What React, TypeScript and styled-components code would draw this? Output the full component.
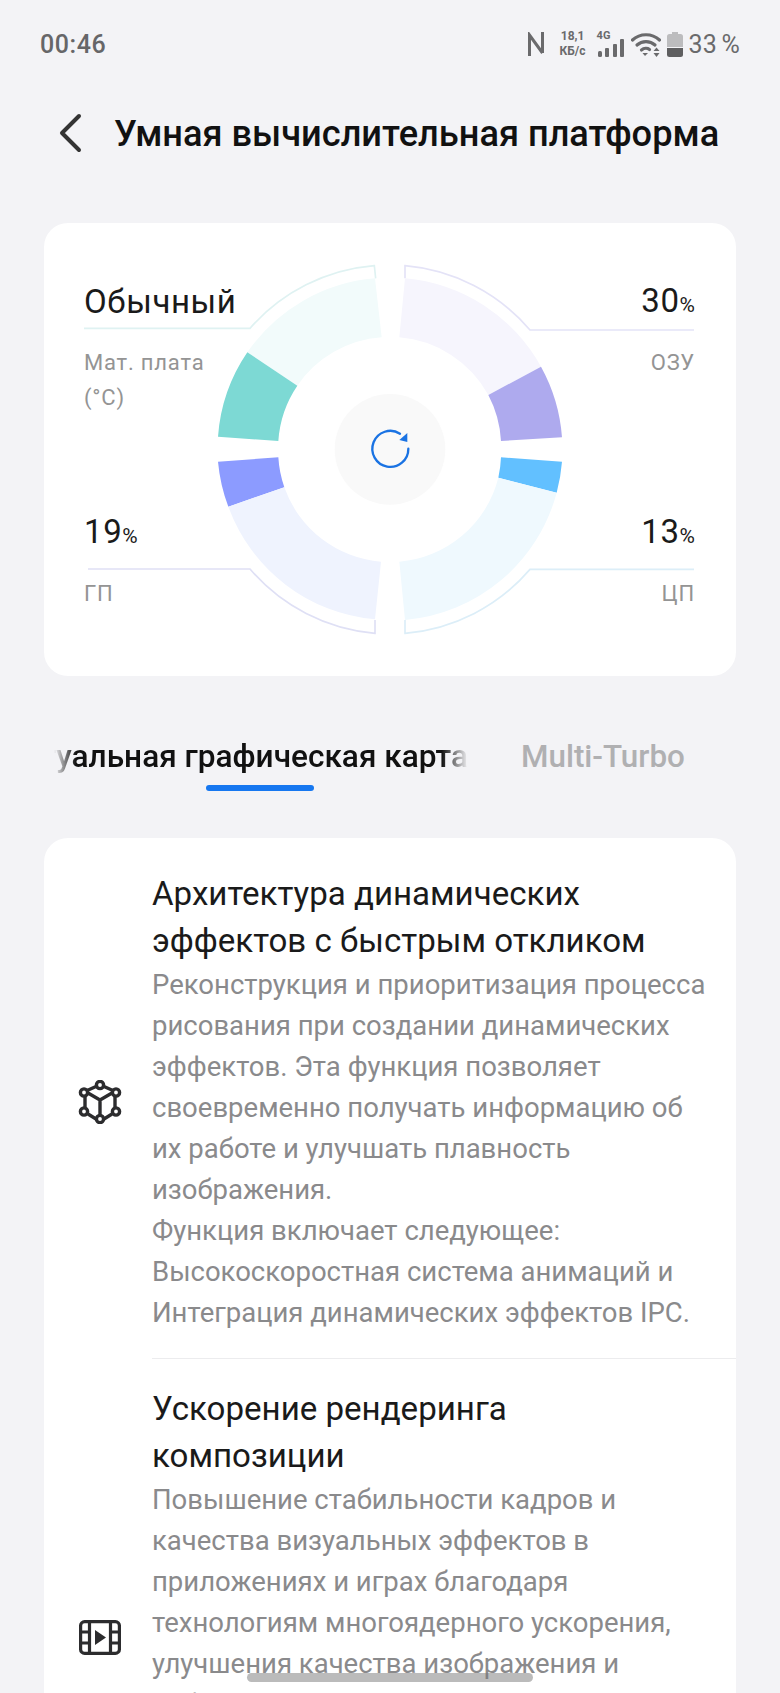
import React from "react";
import styled, { createGlobalStyle } from "styled-components";

const Global = createGlobalStyle`
  html, body { margin: 0; padding: 0; background: #f3f3f6; }
  body { font-family: Roboto, "Noto Sans", sans-serif; }
`;

const Page = styled.div`
  position: relative;
  width: 780px;
  height: 1693px;
  overflow: hidden;
  background: #f3f3f6;
`;

const StatusBar = styled.div`
  display: flex;
  align-items: center;
  justify-content: space-between;
  height: 30px;
  padding: 29px 40px 0 40px;
`;

const Time = styled.span`
  font-size: 25px;
  font-weight: 500;
  letter-spacing: 0.6px;
  color: #666668;
`;

const StatusIcons = styled.div`
  display: flex;
  align-items: center;
  color: #6a6a6c;
`;

const Speed = styled.div`
  display: flex;
  flex-direction: column;
  align-items: center;
  margin: 0 11px 0 15px;
  font-size: 12px;
  font-weight: 700;
  line-height: 15px;
`;

const Net = styled.div`
  position: relative;
  width: 28px;
  height: 25px;
  margin-right: 6px;
`;

const NetLabel = styled.span`
  position: absolute;
  left: 0;
  top: -3px;
  font-size: 11px;
  font-weight: 700;
  line-height: 13px;
`;

const BarsSlot = styled.span`
  position: absolute;
  left: 0;
  bottom: 0;
  display: flex;
`;

const BatterySlot = styled.span`
  display: flex;
  margin-left: 6px;
`;

const Percent = styled.span`
  margin-left: 6px;
  font-size: 25px;
  word-spacing: -2px;
  letter-spacing: 0.2px;
`;

const Header = styled.div`
  display: flex;
  align-items: center;
  height: 44px;
  margin-top: 52px;
  padding-left: 58px;
`;

const Title = styled.h1`
  margin: 0 0 0 32px;
  font-size: 36.2px;
  font-weight: 500;
  color: #111;
  white-space: nowrap;
`;

const GaugeCard = styled.section`
  display: grid;
  width: 692px;
  height: 453px;
  margin: 68px 0 0 44px;
  background: #fff;
  border-radius: 24px;
  overflow: hidden;
`;

const GaugeSvg = styled.svg`
  grid-area: 1 / 1;
  width: 692px;
  height: 453px;
`;

const Labels = styled.div`
  grid-area: 1 / 1;
  display: grid;
  grid-template-columns: 1fr 1fr;
  grid-template-rows: 1fr 1fr;
  padding: 0 41px 0 40px;
`;

const Label = styled.div<{ $right?: boolean; $top: number }>`
  display: flex;
  flex-direction: column;
  align-items: ${(p) => (p.$right ? "flex-end" : "flex-start")};
  text-align: ${(p) => (p.$right ? "right" : "left")};
  padding-top: ${(p) => p.$top}px;
`;

const Value = styled.div`
  font-size: 33px;
  line-height: 36px;
  letter-spacing: 0.6px;
  color: #1a1a1a;
  small {
    font-size: 21px;
    line-height: 0;
    letter-spacing: 0;
  }
`;

const Caption = styled.div<{ $gap: number }>`
  margin-top: ${(p) => p.$gap}px;
  font-size: 22px;
  line-height: 35px;
  letter-spacing: 0.8px;
  color: #949494;
`;

const Tabs = styled.div`
  display: flex;
  align-items: flex-start;
  height: 100px;
  margin-top: 62px;
`;

const TabClip = styled.div`
  display: flex;
  flex-direction: column;
  align-items: flex-end;
  width: 414px;
  margin-left: 54px;
  overflow: hidden;
  -webkit-mask-image: linear-gradient(90deg, transparent 0, #000 22px, #000 388px, transparent 414px);
  mask-image: linear-gradient(90deg, transparent 0, #000 22px, #000 388px, transparent 414px);
`;

const ActiveTab = styled.div`
  flex: none;
  font-size: 31.6px;
  font-weight: 500;
  line-height: 38px;
  color: #111;
  white-space: nowrap;
`;

const Underline = styled.div`
  width: 108px;
  height: 6px;
  margin: 9px 154px 0 0;
  border-radius: 3px;
  background: #1677f0;
`;

const Tab = styled.div`
  margin-left: 53px;
  font-size: 31.4px;
  font-weight: 500;
  line-height: 38px;
  color: #b0b0b2;
  white-space: nowrap;
`;

const ListCard = styled.section`
  width: 692px;
  margin: 0 0 0 44px;
  padding-top: 6px;
  background: #fff;
  border-radius: 24px;
`;

const Row = styled.div<{ $minHeight?: number }>`
  display: flex;
  align-items: center;
  min-height: ${(p) => p.$minHeight ?? 0}px;
`;

const IconCell = styled.div`
  flex: 0 0 108px;
  display: flex;
  justify-content: center;
  padding-left: 3px;
  box-sizing: border-box;
  color: #2c2c2e;
`;

const RowBody = styled.div<{ $divider?: boolean }>`
  flex: 1;
  align-self: stretch;
  padding: 26px 22px 25px 0;
  border-bottom: ${(p) => (p.$divider ? "1px solid #ececee" : "none")};
`;

const RowTitle = styled.div`
  padding-right: 30px;
  font-size: 33.1px;
  line-height: 47px;
  color: #1a1a1a;
`;

const RowText = styled.div`
  font-size: 27.5px;
  line-height: 41px;
  color: #8a8a8c;
`;

const HomeBar = styled.div`
  position: absolute;
  left: 247px;
  top: 1673px;
  width: 286px;
  height: 9px;
  border-radius: 5px;
  background: rgba(120, 120, 120, 0.5);
`;

type Seg = { d: string; fill: string };

const arc = (a: number[], b: number[], c: number[], d: number[], sweep: 0 | 1) =>
  `M${a[0]} ${a[1]} A516 516 0 0 ${sweep} ${b[0]} ${b[1]} L${c[0]} ${c[1]} A335 335 0 0 ${sweep ? 0 : 1} ${d[0]} ${d[1]} Z`;

const segments: Seg[] = [
  { d: arc([172, 307], [555, 85], [575, 262], [322, 407], 1), fill: "#f2fbfb" },
  { d: arc([84, 560], [172, 307], [322, 407], [265, 573], 1), fill: "#7dd9d4" },
  { d: arc([645, 85], [1053, 350], [895, 435], [628, 262], 1), fill: "#f6f5fd" },
  { d: arc([1053, 350], [1116, 562], [933, 573], [895, 435], 1), fill: "#aeaaee" },
  { d: arc([1116, 635], [1100, 728], [925, 683], [933, 622], 1), fill: "#62c0ff" },
  { d: arc([1100, 728], [645, 1110], [628, 935], [925, 683], 1), fill: "#eff9fe" },
  { d: arc([115, 770], [84, 635], [265, 622], [283, 712], 1), fill: "#8c9bff" },
  { d: arc([555, 1108], [115, 770], [283, 712], [573, 935], 1), fill: "#eff3fe" },
];

const leaders = [
  { d: "M-318 235 H180 A555 555 0 0 1 553 47 L557 85", stroke: "#dff2f2" },
  { d: "M1512 240 H1020 A555 555 0 0 0 645 47 L645 85", stroke: "#e4e3f7" },
  { d: "M-306 957 H180 A555 555 0 0 0 555 1150 V1110", stroke: "#dfe0f5" },
  { d: "M1512 958 H1020 A555 555 0 0 1 645 1150 V1110", stroke: "#dceef8" },
];

const Gauge = () => (
  <GaugeSvg viewBox="-438 -81 2076 1359" aria-hidden>
    {leaders.map((l) => (
      <path key={l.d} d={l.d} fill="none" stroke={l.stroke} strokeWidth={5} />
    ))}
    {segments.map((s) => (
      <path key={s.d} d={s.d} fill={s.fill} />
    ))}
    <circle cx={600} cy={598} r={166} fill="#f9f9f9" />
    <path
      d="M655 596 A54 54 0 1 1 630 551"
      fill="none"
      stroke="#1a73e3"
      strokeWidth={7}
      strokeLinecap="round"
    />
    <path d="M652 549 L652 576 L628 570 Z" fill="#1a73e3" />
  </GaugeSvg>
);

const NfcIcon = () => (
  <svg width="18" height="24" viewBox="0 0 18 24" fill="none" stroke="currentColor" strokeWidth="3">
    <path d="M2.5 24 V3 L15.5 21 M15.5 0 V21" />
  </svg>
);

const SignalBars = () => (
  <svg width="28" height="18" viewBox="0 0 28 18" fill="currentColor">
    <rect x="1" y="12" width="4" height="6" rx="1.5" />
    <rect x="8" y="9" width="4" height="9" rx="1" />
    <rect x="16" y="5" width="4" height="13" rx="1" />
    <rect x="23" y="0" width="4" height="18" rx="1" />
  </svg>
);

const WifiIcon = () => (
  <svg width="30" height="25" viewBox="0 0 30 25" fill="none" stroke="currentColor" strokeWidth="3.2" strokeLinecap="round">
    <path d="M1.5 8 C9 1 21 1 28.5 8" />
    <path d="M6 13 C11 8.5 19 8.5 24 13" />
    <path d="M10.5 18 C13 16 16.5 16 18.5 17.5" />
    <path d="M14 24 L11.5 21 H17 Z" fill="currentColor" stroke="none" />
    <path d="M25.5 15.5 L28.5 19 H22.5 Z M25.5 25 L22.5 21 H28.5 Z" fill="currentColor" stroke="none" />
  </svg>
);

const BatteryIcon = () => (
  <svg width="16" height="25" viewBox="0 0 16 25">
    <path d="M5 0 H11 V2 H13.5 Q16 2 16 4.5 V15 H0 V4.5 Q0 2 2.5 2 H5 Z" fill="#bcbcbe" />
    <path d="M0 16 H16 V22.5 Q16 25 13.5 25 H2.5 Q0 25 0 22.5 Z" fill="#5e5e60" />
  </svg>
);

const BackIcon = () => (
  <svg width="24" height="40" viewBox="0 0 24 40" fill="none" stroke="#333" strokeWidth="4" strokeLinecap="round" strokeLinejoin="round">
    <path d="M21 3 L4 20 L21 37" />
  </svg>
);

const CubeIcon = () => (
  <svg width="44" height="44" viewBox="0 0 44 44" fill="none" stroke="currentColor" strokeWidth="3.4">
    <path d="M18 6.5 L8 11 M26 6.5 L36 11 M7 16 V28 M37 16 V28 M10 34 L18 39 M34 34 L26 39" />
    <path d="M10 13 L22 20 L34 13 M22 20 V37" />
    <circle cx="22" cy="5" r="3.6" fill="#fff" />
    <circle cx="6" cy="12.5" r="3.6" fill="#fff" />
    <circle cx="38" cy="12.5" r="3.6" fill="#fff" />
    <circle cx="6" cy="31.5" r="3.6" fill="#fff" />
    <circle cx="38" cy="31.5" r="3.6" fill="#fff" />
    <circle cx="22" cy="39" r="3.6" fill="#fff" />
  </svg>
);

const FilmIcon = () => (
  <svg width="42" height="35" viewBox="0 0 42 35" fill="none" stroke="currentColor" strokeWidth="3.2">
    <rect x="1.6" y="1.6" width="38.8" height="31.8" rx="4" />
    <path d="M10.5 2 V33 M31.5 2 V33 M2 12 H10 M2 23 H10 M32 12 H40 M32 23 H40" />
    <path d="M16 10 L27 17.5 L16 25 Z" fill="currentColor" stroke="none" />
  </svg>
);

export default function App() {
  return (
    <Page>
      <Global />
      <StatusBar>
        <Time>00:46</Time>
        <StatusIcons>
          <NfcIcon />
          <Speed>
            <span>18,1</span>
            <span>КБ/с</span>
          </Speed>
          <Net>
            <NetLabel>4G</NetLabel>
            <BarsSlot>
              <SignalBars />
            </BarsSlot>
          </Net>
          <WifiIcon />
          <BatterySlot>
            <BatteryIcon />
          </BatterySlot>
          <Percent>33 %</Percent>
        </StatusIcons>
      </StatusBar>

      <Header>
        <BackIcon />
        <Title>Умная вычислительная платформа</Title>
      </Header>

      <GaugeCard>
        <Gauge />
        <Labels>
          <Label $top={61}>
            <Value>Обычный</Value>
            <Caption $gap={25}>
              Мат. плата
              <br />
              (°C)
            </Caption>
          </Label>
          <Label $right $top={60}>
            <Value>
              30<small>%</small>
            </Value>
            <Caption $gap={26}>ОЗУ</Caption>
          </Label>
          <Label $top={64}>
            <Value>
              19<small>%</small>
            </Value>
            <Caption $gap={26}>ГП</Caption>
          </Label>
          <Label $right $top={64}>
            <Value>
              13<small>%</small>
            </Value>
            <Caption $gap={26}>ЦП</Caption>
          </Label>
        </Labels>
      </GaugeCard>

      <Tabs>
        <TabClip>
          <ActiveTab>Виртуальная графическая карта</ActiveTab>
          <Underline />
        </TabClip>
        <Tab>Multi-Turbo</Tab>
      </Tabs>

      <ListCard>
        <Row>
          <IconCell>
            <CubeIcon />
          </IconCell>
          <RowBody $divider>
            <RowTitle>Архитектура динамических эффектов с быстрым откликом</RowTitle>
            <RowText>
              Реконструкция и приоритизация процесса рисования при создании динамических эффектов. Эта функция позволяет
              своевременно получать информацию об их работе и улучшать плавность изображения.
              <br />
              Функция включает следующее:
              <br />
              Высокоскоростная система анимаций и Интеграция динамических эффектов IPC.
            </RowText>
          </RowBody>
        </Row>
        <Row $minHeight={557}>
          <IconCell>
            <FilmIcon />
          </IconCell>
          <RowBody>
            <RowTitle>Ускорение рендеринга композиции</RowTitle>
            <RowText>
              Повышение стабильности кадров и качества визуальных эффектов в приложениях и играх благодаря технологиям
              многоядерного ускорения, улучшения качества изображения и рабочих характеристик.
            </RowText>
          </RowBody>
        </Row>
      </ListCard>
      <HomeBar />
    </Page>
  );
}
